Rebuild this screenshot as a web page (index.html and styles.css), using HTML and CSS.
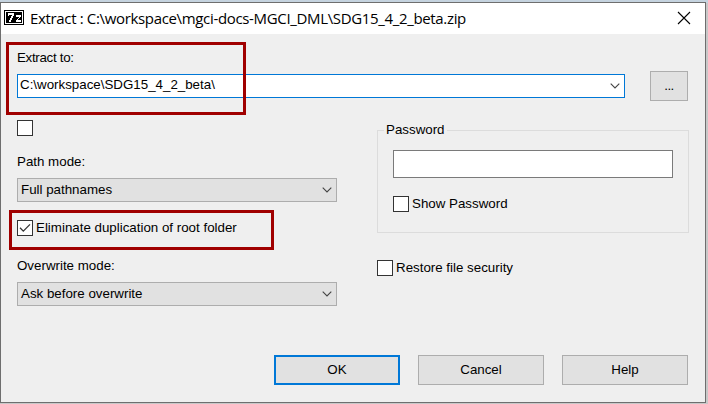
FILE: index.html
```html
<!DOCTYPE html>
<html lang="en">
<head>
<meta charset="utf-8">
<title>Extract</title>
<link rel="stylesheet" href="styles.css">
</head>
<body>
<main class="dialog">
  <header class="titlebar">
    <svg class="logo" width="20" height="15" viewBox="0 0 20 15" shape-rendering="crispEdges">
      <path fill="#000" d="M0 0h20v15H0z"/>
      <path fill="#fff" d="M1 1h18v13H1z"/>
      <path fill="#000" d="M2 2h16v11H2z"/>
      <path fill="#fff" d="M4 3h6v3H9v2H8v2H7v2H5v-2h1V8h1V6h1V5H5v1H4z"/>
      <path fill="#fff" d="M12 5h5v2h-1v1h-1v1h-1v1h3v2h-5v-2h1V9h1V8h1V7h-3z"/>
    </svg>
    <h1 class="title">Extract : C:\workspace\mgci-docs-MGCI_DML\SDG15_4_2_beta.zip</h1>
    <svg class="close" width="14" height="14" viewBox="0 0 14 14"><path d="M1 1l12 12M13 1L1 13"/></svg>
  </header>
  <section class="content">
    <div class="label extract-label">Extract to:</div>
    <div class="path-row">
      <div class="combo path-combo"><span>C:\workspace\SDG15_4_2_beta\</span><svg class="chevron" width="10" height="6" viewBox="0 0 10 6"><path d="M.7.7L5 5 9.3.7"/></svg></div>
      <button class="button browse">...</button>
    </div>
    <div class="columns">
      <div class="left">
        <span class="box"></span>
        <div class="label path-label">Path mode:</div>
        <div class="combo"><span>Full pathnames</span><svg class="chevron" width="10" height="6" viewBox="0 0 10 6"><path d="M.7.7L5 5 9.3.7"/></svg></div>
        <label class="check eliminate"><span class="box"><svg width="14" height="14" viewBox="0 0 14 14"><path d="M2 6.8l3.3 3.3L12 3.4"/></svg></span><span>Eliminate duplication of root folder</span></label>
        <div class="label overwrite-label">Overwrite mode:</div>
        <div class="combo"><span>Ask before overwrite</span><svg class="chevron" width="10" height="6" viewBox="0 0 10 6"><path d="M.7.7L5 5 9.3.7"/></svg></div>
      </div>
      <div class="right">
        <fieldset class="group">
          <legend>Password</legend>
          <input class="password" type="password">
          <label class="check"><span class="box"></span><span>Show Password</span></label>
        </fieldset>
        <label class="check restore"><span class="box"></span><span>Restore file security</span></label>
      </div>
    </div>
    <footer class="actions">
      <button class="button primary">OK</button>
      <button class="button">Cancel</button>
      <button class="button">Help</button>
    </footer>
  </section>
</main>
<div class="highlight highlight-path"></div>
<div class="highlight highlight-root"></div>
</body>
</html>
```
FILE: styles.css
```css
* { box-sizing: border-box; }

body {
  margin: 0;
  padding-top: 2px;
  height: 404px;
  overflow: hidden;
  position: relative;
  background: linear-gradient(#c5d3df 0 3px, #c8c8c8 3px);
  font: 13.33px/16px "Liberation Sans", Arial, sans-serif;
  color: #000;
}

.dialog {
  width: 706px;
  height: 401px;
  border: 1px solid #6e6e6e;
  background: #efefef;
}

.titlebar {
  display: flex;
  align-items: center;
  height: 31px;
  padding: 0 14px 0 3px;
  background: #fff;
}

.logo { display: block; margin-top: -2px; }

.title {
  flex: 1;
  margin: -2px 0 0 6px;
  font: 400 15px/22px "Open Sans", "Noto Sans", sans-serif;
  letter-spacing: -0.34px;
  white-space: nowrap;
}

.close { margin-top: -1px; fill: none; stroke: #000; stroke-width: 1.1; }

.content { padding: 16px 16px 0; }

.label { height: 16px; white-space: nowrap; }

.extract-label { margin-bottom: 5px; letter-spacing: -0.3px; }

.path-row {
  display: flex;
  align-items: center;
  justify-content: space-between;
  width: 671px;
  height: 30px;
}

.combo {
  display: flex;
  align-items: center;
  justify-content: space-between;
  width: 320px;
  height: 24px;
  padding: 0 4px 0 3px;
  border: 1px solid #adadad;
  background: #e1e1e1;
  white-space: nowrap;
}

.path-combo {
  width: 608px;
  padding-left: 2px;
  border-color: #0078d7;
  background: #fff;
}

.path-combo span { margin-top: -2px; }

.chevron { fill: none; stroke: #444; stroke-width: 1.1; }

.button {
  width: 126px;
  height: 30px;
  padding: 0;
  border: 1px solid #adadad;
  background: #e1e1e1;
  font: inherit;
  color: inherit;
}

.browse { width: 38px; letter-spacing: -0.5px; }

.primary { border: 2px solid #0078d7; }

.columns { display: flex; gap: 40px; height: 235px; padding-top: 19px; }

.box {
  display: block;
  flex: none;
  width: 16px;
  height: 16px;
  border: 1px solid #333;
  background: #fff;
}

.box svg { display: block; fill: none; stroke: #333; stroke-width: 1.3; }

.check { display: flex; gap: 3px; height: 16px; white-space: nowrap; }

.path-label { margin: 18px 0 8px; }

.eliminate { margin-top: 18px; }

.overwrite-label { margin: 22px 0 8px; }

.right { padding-top: 2px; }

.group {
  width: 312px;
  height: 111px;
  margin: 0;
  padding: 12px 15px 0;
  border: 1px solid #dcdcdc;
}

.group legend { height: 16px; margin-left: -9px; padding: 0 2px; }

.password {
  display: block;
  width: 280px;
  height: 28px;
  margin: 0 0 18px;
  border: 1px solid #7a7a7a;
  background: #fff;
}

.restore { margin-top: 27px; }

.actions { display: flex; justify-content: flex-end; gap: 18px; margin-top: 19px; padding-right: 1px; }

.highlight { position: absolute; border: 3px solid #a00000; }

.highlight-path { left: 6px; top: 42px; width: 240px; height: 73px; }

.highlight-root { left: 9px; top: 210px; width: 265px; height: 40px; }
```
